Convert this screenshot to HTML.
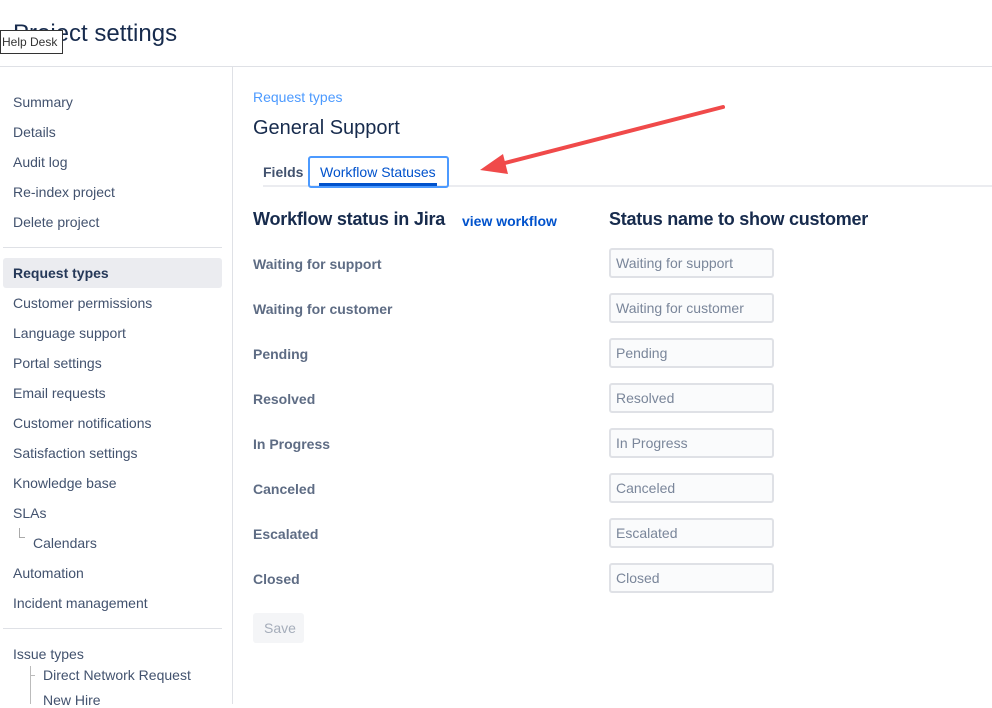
<!DOCTYPE html>
<html><head><style>
*{margin:0;padding:0;box-sizing:border-box}
body{width:992px;height:704px;overflow:hidden;background:#fff;font-family:"Liberation Sans",sans-serif;color:#172b4d;position:relative}
.a{position:absolute;white-space:nowrap}
.nav{font-size:14px;color:#42526e;left:13px}
.lbl{font-size:14px;color:#5e6c84;font-weight:bold;left:253px}
.inp{position:absolute;left:609px;width:165px;height:30px;border:2px solid #dfe1e6;background:#fafbfc;border-radius:3px;font-size:14px;color:#7a869a;padding:5px 5px;}
</style></head><body>
<div class="a" style="left:13px;top:20px;font-size:24px;color:#172b4d">Project settings</div>
<div class="a" style="left:0;top:30px;height:24px;width:63px;border:1px solid #333;background:#fff;font-size:12px;color:#333;padding:4px 1px">Help Desk</div>
<div class="a" style="left:0;top:66px;width:992px;height:1px;background:#dfe1e6"></div>
<div class="a" style="left:232px;top:66px;width:1px;height:638px;background:#dfe1e6"></div>
<div class="a" style="left:3px;top:258px;width:219px;height:30px;background:#ebecf0;border-radius:3px"></div>
<div class="a" style="left:3px;top:247px;width:219px;height:1px;background:#dfe1e6"></div>
<div class="a" style="left:3px;top:628px;width:219px;height:1px;background:#dfe1e6"></div>
<div class="a nav" style="top:94px">Summary</div>
<div class="a nav" style="top:124px">Details</div>
<div class="a nav" style="top:154px">Audit log</div>
<div class="a nav" style="top:184px">Re-index project</div>
<div class="a nav" style="top:214px">Delete project</div>
<div class="a nav" style="top:265px;font-weight:bold;color:#253858">Request types</div>
<div class="a nav" style="top:295px">Customer permissions</div>
<div class="a nav" style="top:325px">Language support</div>
<div class="a nav" style="top:355px">Portal settings</div>
<div class="a nav" style="top:385px">Email requests</div>
<div class="a nav" style="top:415px">Customer notifications</div>
<div class="a nav" style="top:445px">Satisfaction settings</div>
<div class="a nav" style="top:475px">Knowledge base</div>
<div class="a nav" style="top:505px">SLAs</div>
<div class="a" style="left:19px;top:528px;width:6px;height:10px;border-left:1px solid #aaa;border-bottom:1px solid #aaa"></div>
<div class="a nav" style="left:33px;top:535px">Calendars</div>
<div class="a nav" style="top:565px">Automation</div>
<div class="a nav" style="top:595px">Incident management</div>
<div class="a nav" style="top:646px">Issue types</div>
<div class="a" style="left:30px;top:666px;width:1px;height:38px;background:#bbb"></div>
<div class="a" style="left:30px;top:675px;width:5px;height:1px;background:#bbb"></div>
<div class="a nav" style="left:43px;top:667px">Direct Network Request</div>
<div class="a nav" style="left:43px;top:692px">New Hire</div>

<div class="a" style="left:253px;top:89px;font-size:14px;color:#4c9aff">Request types</div>
<div class="a" style="left:253px;top:117px;font-size:20px;color:#172b4d">General Support</div>
<div class="a" style="left:263px;top:185px;width:729px;height:2px;background:#ebecf0"></div>
<div class="a" style="left:263px;top:164px;font-size:14px;font-weight:bold;color:#42526e">Fields</div>
<div class="a" style="left:308px;top:156px;width:141px;height:32px;border:2px solid #4c9aff;border-radius:3px"></div>
<div class="a" style="left:320px;top:164px;font-size:14px;color:#0052cc">Workflow Statuses</div>
<div class="a" style="left:319px;top:183px;width:118px;height:3px;background:#0052cc"></div>
<svg class="a" style="left:475px;top:98px" width="255" height="80"><line x1="248" y1="9" x2="22" y2="67" stroke="#f04a4a" stroke-width="4" stroke-linecap="round"/><polygon points="5,72 28,56 33,76" fill="#f04a4a"/></svg>
<div class="a" style="left:253px;top:209px;font-size:18px;font-weight:bold;color:#172b4d;letter-spacing:-0.2px">Workflow status in Jira</div>
<div class="a" style="left:462px;top:213px;font-size:14px;font-weight:bold;color:#0052cc">view workflow</div>
<div class="a" style="left:609px;top:209px;font-size:18px;font-weight:bold;color:#172b4d;letter-spacing:-0.25px">Status name to show customer</div>
<div class="a lbl" style="top:256px">Waiting for support</div><div class="inp" style="top:248px">Waiting for support</div>
<div class="a lbl" style="top:301px">Waiting for customer</div><div class="inp" style="top:293px">Waiting for customer</div>
<div class="a lbl" style="top:346px">Pending</div><div class="inp" style="top:338px">Pending</div>
<div class="a lbl" style="top:391px">Resolved</div><div class="inp" style="top:383px">Resolved</div>
<div class="a lbl" style="top:436px">In Progress</div><div class="inp" style="top:428px">In Progress</div>
<div class="a lbl" style="top:481px">Canceled</div><div class="inp" style="top:473px">Canceled</div>
<div class="a lbl" style="top:526px">Escalated</div><div class="inp" style="top:518px">Escalated</div>
<div class="a lbl" style="top:571px">Closed</div><div class="inp" style="top:563px">Closed</div>
<div class="a" style="left:253px;top:613px;width:51px;height:30px;background:#f4f5f7;border-radius:3px;font-size:14px;color:#a5adba;padding:7px 11px">Save</div>
</body></html>
